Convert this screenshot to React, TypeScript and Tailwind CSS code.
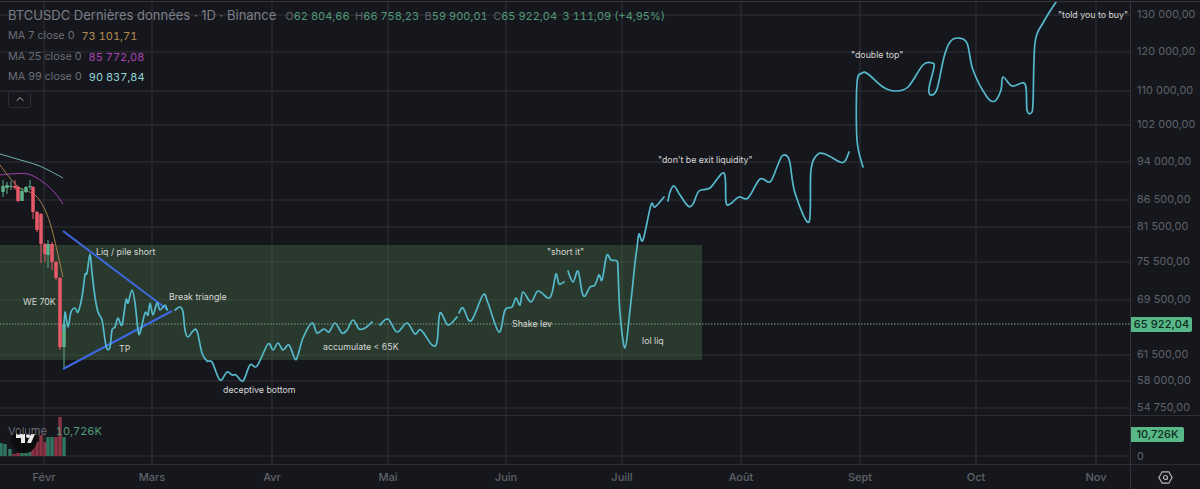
import { ChevronUp } from "lucide-react";

type Pt = [number, number];

// turns hand-read points into a smooth curve
const smooth = (pts: Pt[]) => {
  let d = `M${pts[0][0]} ${pts[0][1]}`;
  for (let i = 0; i < pts.length - 1; i++) {
    const p0 = pts[i - 1] ?? pts[i];
    const p1 = pts[i];
    const p2 = pts[i + 1];
    const p3 = pts[i + 2] ?? p2;
    const c1x = p1[0] + (p2[0] - p0[0]) / 6;
    const c1y = p1[1] + (p2[1] - p0[1]) / 6;
    const c2x = p2[0] - (p3[0] - p1[0]) / 6;
    const c2y = p2[1] - (p3[1] - p1[1]) / 6;
    d += ` C${c1x} ${c1y} ${c2x} ${c2y} ${p2[0]} ${p2[1]}`;
  }
  return d;
};

const drawing: Pt[][] = [
  [[64, 330], [65, 312], [68, 327], [71, 312], [75, 308], [78, 312], [82, 297], [85, 275], [87, 273], [90, 254], [92, 273], [95, 297], [98, 312], [102, 320], [105, 340], [107, 349], [110, 347], [112, 330], [115, 327], [118, 318], [122, 325], [126, 300], [128, 303], [132, 290], [135, 303], [138, 330], [140, 333], [145, 313], [148, 315], [150, 303], [153, 315], [157, 303], [160, 310], [165, 305], [167, 310]],
  [[175, 310], [180, 307], [183, 312], [185, 330], [188, 337], [193, 331], [197, 331], [202, 353], [207, 361], [212, 362], [220, 380], [227, 372], [232, 375], [236, 375], [243, 381], [250, 365], [257, 366], [268, 344], [273, 350], [278, 343], [283, 350], [289, 345], [295, 359], [298, 355], [303, 338], [312, 323], [317, 333], [324, 329], [329, 332], [335, 323], [342, 333], [347, 330], [353, 320], [359, 329], [365, 328], [372, 322]],
  [[380, 325], [388, 319], [397, 332], [407, 323], [415, 334], [421, 330], [432, 345], [437, 342], [440, 313], [448, 325], [457, 317]],
  [[459, 313], [463, 308], [471, 321], [483, 295], [488, 303], [499, 332], [505, 310], [512, 307], [516, 298], [520, 305], [523, 292], [531, 302], [538, 291], [548, 298], [552, 293], [556, 274], [559, 284], [564, 282]],
  [[568, 271], [573, 282], [578, 271], [582, 292], [585, 296], [590, 287], [595, 285], [599, 275], [602, 280], [606, 258], [608, 255], [611, 260], [617, 261], [618, 270], [620, 313], [625, 348], [630, 310], [635, 263], [637, 248], [639, 234], [643, 240], [651, 205], [655, 207], [664, 197]],
  [[668, 201], [670, 192], [674, 186], [680, 195], [688, 206], [693, 204], [699, 191], [710, 188], [724, 173], [726, 202], [730, 204], [739, 197], [748, 198], [760, 179], [770, 182], [777, 167], [782, 156], [787, 156], [790, 163], [795, 193], [809, 222], [811, 170], [818, 154], [827, 155], [840, 162], [845, 161], [849, 152]],
  [[863, 167], [857, 140], [857, 83], [862, 73], [868, 74], [883, 87], [895, 91], [908, 87], [923, 65], [932, 63], [934, 67], [929, 88], [931, 95], [937, 89], [944, 57], [950, 42], [958, 38], [967, 43], [973, 70], [987, 97], [995, 101], [1001, 90], [1003, 77], [1012, 86], [1025, 84], [1027, 110], [1031, 113], [1033, 103], [1035, 43], [1043, 23], [1056, 2]],
];

const ma7: Pt[] = [[0, 165], [10, 178], [20, 188], [37, 197], [50, 223], [63, 277]];
const ma25: Pt[] = [[0, 175], [10, 174], [28, 174], [43, 182], [55, 193], [63, 204]];
const ma99: Pt[] = [[0, 154], [17, 159], [37, 165], [50, 171], [63, 178]];

// x, wick top, wick bottom, body top, body bottom, up
const candles: [number, number, number, number, number, boolean][] = [
  [3, 180, 197, 186, 192, true],
  [7, 182, 194, 185, 188, true],
  [11, 181, 190, 186, 187, true],
  [15, 180, 190, 186, 188, false],
  [18, 186, 202, 187, 201, false],
  [22, 188, 201, 191, 201, true],
  [26, 186, 193, 187, 192, true],
  [30, 180, 190, 186, 187, true],
  [33, 186, 219, 187, 212, false],
  [37, 211, 232, 212, 230, false],
  [41, 213, 263, 214, 244, false],
  [45, 243, 262, 244, 254, false],
  [48, 240, 268, 244, 255, true],
  [52, 242, 270, 244, 262, false],
  [56, 261, 280, 262, 278, false],
  [60, 277, 350, 278, 347, false],
  [64, 320, 369, 324, 347, true],
];

const volumes: [number, number, boolean][] = [
  [1, 443, true], [5, 444, true], [10, 449, true], [14, 454, false], [18, 453, false],
  [22, 453, true], [26, 453, true], [30, 452, true], [33, 447, false], [37, 442, false],
  [41, 435, false], [45, 442, false], [48, 437, true], [52, 437, true], [56, 437, false],
  [60, 417, false], [64, 437, true],
];

const verticals = [44, 152, 272, 388, 506, 622, 741, 860, 976, 1096];
const prices: [string, number][] = [
  ["130 000,00", 15], ["120 000,00", 52], ["110 000,00", 91], ["102 000,00", 125],
  ["94 000,00", 162], ["86 500,00", 200], ["81 500,00", 227], ["75 500,00", 262],
  ["69 500,00", 300], ["61 500,00", 355], ["58 000,00", 381], ["54 750,00", 408],
];
const months: [string, number][] = [
  ["Févr", 44], ["Mars", 152], ["Avr", 272], ["Mai", 388], ["Juin", 506],
  ["Juill", 622], ["Août", 741], ["Sept", 860], ["Oct", 976], ["Nov", 1096],
];
const notes: [string, number, number][] = [
  ["Liq / pile short", 96, 255],
  ["WE 70K", 23, 305],
  ["Break triangle", 169, 300],
  ["TP", 119, 352],
  ["deceptive bottom", 223, 393],
  ["accumulate < 65K", 323, 350],
  ["Shake lev", 512, 327],
  ['"short it"', 547, 255],
  ["lol liq", 642, 344],
  ['"don\'t be exit liquidity"', 658, 163],
  ['"double top"', 851, 58],
  ['"told you to buy"', 1058, 18],
];

const Ohlc = ({ label, value }: { label: string; value: string }) => (
  <span>
    <span className="text-[#5f6269]">{label}</span>
    {value}
  </span>
);

const MaRow = ({ name, value, color }: { name: string; value: string; color: string }) => (
  <div className="flex h-[20.5px] items-center gap-[7px]">
    <span className="text-[10.8px] text-[#6a6d75]">{name}</span>
    <span className={`text-[11px] tabular-nums ${color}`}>{value}</span>
  </div>
);

export default function App() {
  return (
    <div className="flex h-[489px] w-[1200px] flex-col overflow-hidden bg-[#16171d] [font-family:Inter,sans-serif]">
      <div className="mt-px h-px bg-[#33343b]" />

      <div className="flex h-[414px] border-b border-[#2e2f36]">
        <div className="relative w-[1130px]">
          <svg viewBox="0 2 1130 413" className="absolute inset-0 h-[413px] w-[1130px]">
            {prices.map(([label, y]) => (
              <line key={label} x1="0" x2="1130" y1={y} y2={y} className="stroke-[#303138]" />
            ))}
            {verticals.map((x) => (
              <line key={x} x1={x} x2={x} y1="2" y2="415" className="stroke-[#303138]" />
            ))}
            <rect x="0" y="245" width="702" height="115" className="fill-[#486e47] opacity-40" />
            <line x1="0" x2="1130" y1="324" y2="324" strokeDasharray="1.5 1.5" className="stroke-[#7fa08c]" />

            <path d={smooth(ma99)} fill="none" strokeWidth="1" className="stroke-[#6fb3b5]" />
            <path d={smooth(ma25)} fill="none" strokeWidth="1" className="stroke-[#a53fb0]" />
            <path d={smooth(ma7)} fill="none" strokeWidth="1" className="stroke-[#a9804a]" />

            {candles.map(([x, wt, wb, bt, bb, up]) => (
              <g key={x} className={up ? "fill-[#5db08a]" : "fill-[#e8596a]"}>
                <rect x={x - 0.5} y={wt} width="1" height={wb - wt} />
                <rect x={x - 1.75} y={bt} width="3.5" height={bb - bt} />
              </g>
            ))}

            <line x1="63" y1="231" x2="168" y2="310" strokeWidth="2" className="stroke-[#3d68e0]" />
            <line x1="63" y1="369" x2="172" y2="311" strokeWidth="2" className="stroke-[#3d68e0]" />

            {drawing.map((pts, i) => (
              <path
                key={i}
                d={smooth(pts)}
                fill="none"
                strokeWidth="1.7"
                strokeLinecap="round"
                strokeLinejoin="round"
                className="stroke-[#55b9cc]"
              />
            ))}

            {notes.map(([text, x, y]) => (
              <text key={text} x={x} y={y} className="fill-[#d6d7d6] text-[8.8px]">
                {text}
              </text>
            ))}
          </svg>

          <div className="absolute left-2 top-[4px] flex flex-col">
            <div className="flex h-5 items-center gap-[9px] whitespace-nowrap">
              <span className="text-[13px] text-[#7c7f87]">BTCUSDC Dernières données · 1D · Binance</span>
              <div className="flex gap-[5.5px] text-[11px] tabular-nums text-[#4f9b78]">
                <Ohlc label="O" value="62 804,66" />
                <Ohlc label="H" value="66 758,23" />
                <Ohlc label="B" value="59 900,01" />
                <Ohlc label="C" value="65 922,04" />
                <span>3 111,09 (+4,95%)</span>
              </div>
            </div>
            <MaRow name="MA 7 close 0" value="73 101,71" color="text-[#b58a50]" />
            <MaRow name="MA 25 close 0" value="85 772,08" color="text-[#a942b5]" />
            <MaRow name="MA 99 close 0" value="90 837,84" color="text-[#8fd3d6]" />
            <button className="mt-[3px] flex h-[17px] w-[23px] items-center justify-center rounded-[3px] border border-[#2e2f36] bg-[#16171d] text-[#b5b6ba]">
              <ChevronUp size={12} strokeWidth={2} />
            </button>
          </div>
        </div>

        <div className="relative flex-1 border-l border-[#33343b] text-[10.8px] tracking-[0.1px] text-[#5f6269]">
          {prices.map(([label, y]) => (
            <span key={label} className="absolute left-[6px] -translate-y-1/2 whitespace-nowrap" style={{ top: y - 2 }}>
              {label}
            </span>
          ))}
          <span className="absolute left-0 top-[315px] flex h-[15px] w-[61px] items-center justify-center rounded-r-[2px] bg-[#58b888] text-[11px] font-medium text-[#0c2a1c]">
            65 922,04
          </span>
        </div>
      </div>

      <div className="flex h-[49px] border-b border-[#2e2f36]">
        <div className="relative w-[1130px]">
          <svg viewBox="0 416 1130 48" className="absolute inset-0 h-[48px] w-[1130px]">
            <line x1="0" x2="1130" y1="456" y2="456" className="stroke-[#303138]" />
            {verticals.map((x) => (
              <line key={x} x1={x} x2={x} y1="416" y2="464" className="stroke-[#303138]" />
            ))}
            {volumes.map(([x, top, up]) => (
              <rect key={x} x={x - 1.75} y={top} width="3.5" height={456 - top} className={up ? "fill-[#2f7560]" : "fill-[#8a3344]"} />
            ))}
            <circle cx="24" cy="440" r="13" className="fill-[#0c0c0e]" />
            <path d="M16 434h9v9h-4v-5h-5z" className="fill-[#ececec]" />
            <circle cx="28" cy="436" r="2" className="fill-[#ececec]" />
            <path d="M31 434h4l-4 9h-4z" className="fill-[#ececec]" />
          </svg>
          <div className="absolute left-2 top-[7px] flex items-center gap-[9px]">
            <span className="text-[11px] text-[#6a6d75]">Volume</span>
            <span className="text-[11px] tabular-nums text-[#4f9b78]">10,726K</span>
          </div>
        </div>
        <div className="relative flex-1 border-l border-[#33343b] text-[10.8px] text-[#5f6269]">
          <span className="absolute left-0 top-[11px] flex h-[15px] w-[53px] items-center justify-center rounded-r-[2px] bg-[#58b888] text-[11px] font-medium text-[#0c2a1c]">
            10,726K
          </span>
          <span className="absolute left-[6px] top-[33px]">0</span>
        </div>
      </div>

      <div className="flex h-[24px]">
        <div className="relative w-[1130px] text-[11px] font-medium text-[#5f6269]">
          {months.map(([label, x]) => (
            <span key={label} className="absolute top-[4px] -translate-x-1/2" style={{ left: x }}>
              {label}
            </span>
          ))}
        </div>
        <div className="flex flex-1 items-center justify-center border-l border-[#33343b] text-[#b5b6ba]">
          <svg width="15" height="15" viewBox="0 0 15 15" fill="none" stroke="currentColor" strokeWidth="1.2">
            <path d="M4.2 1.8h6.6l3.3 5.7-3.3 5.7H4.2L.9 7.5z" />
            <circle cx="7.5" cy="7.5" r="2" />
          </svg>
        </div>
      </div>
    </div>
  );
}
